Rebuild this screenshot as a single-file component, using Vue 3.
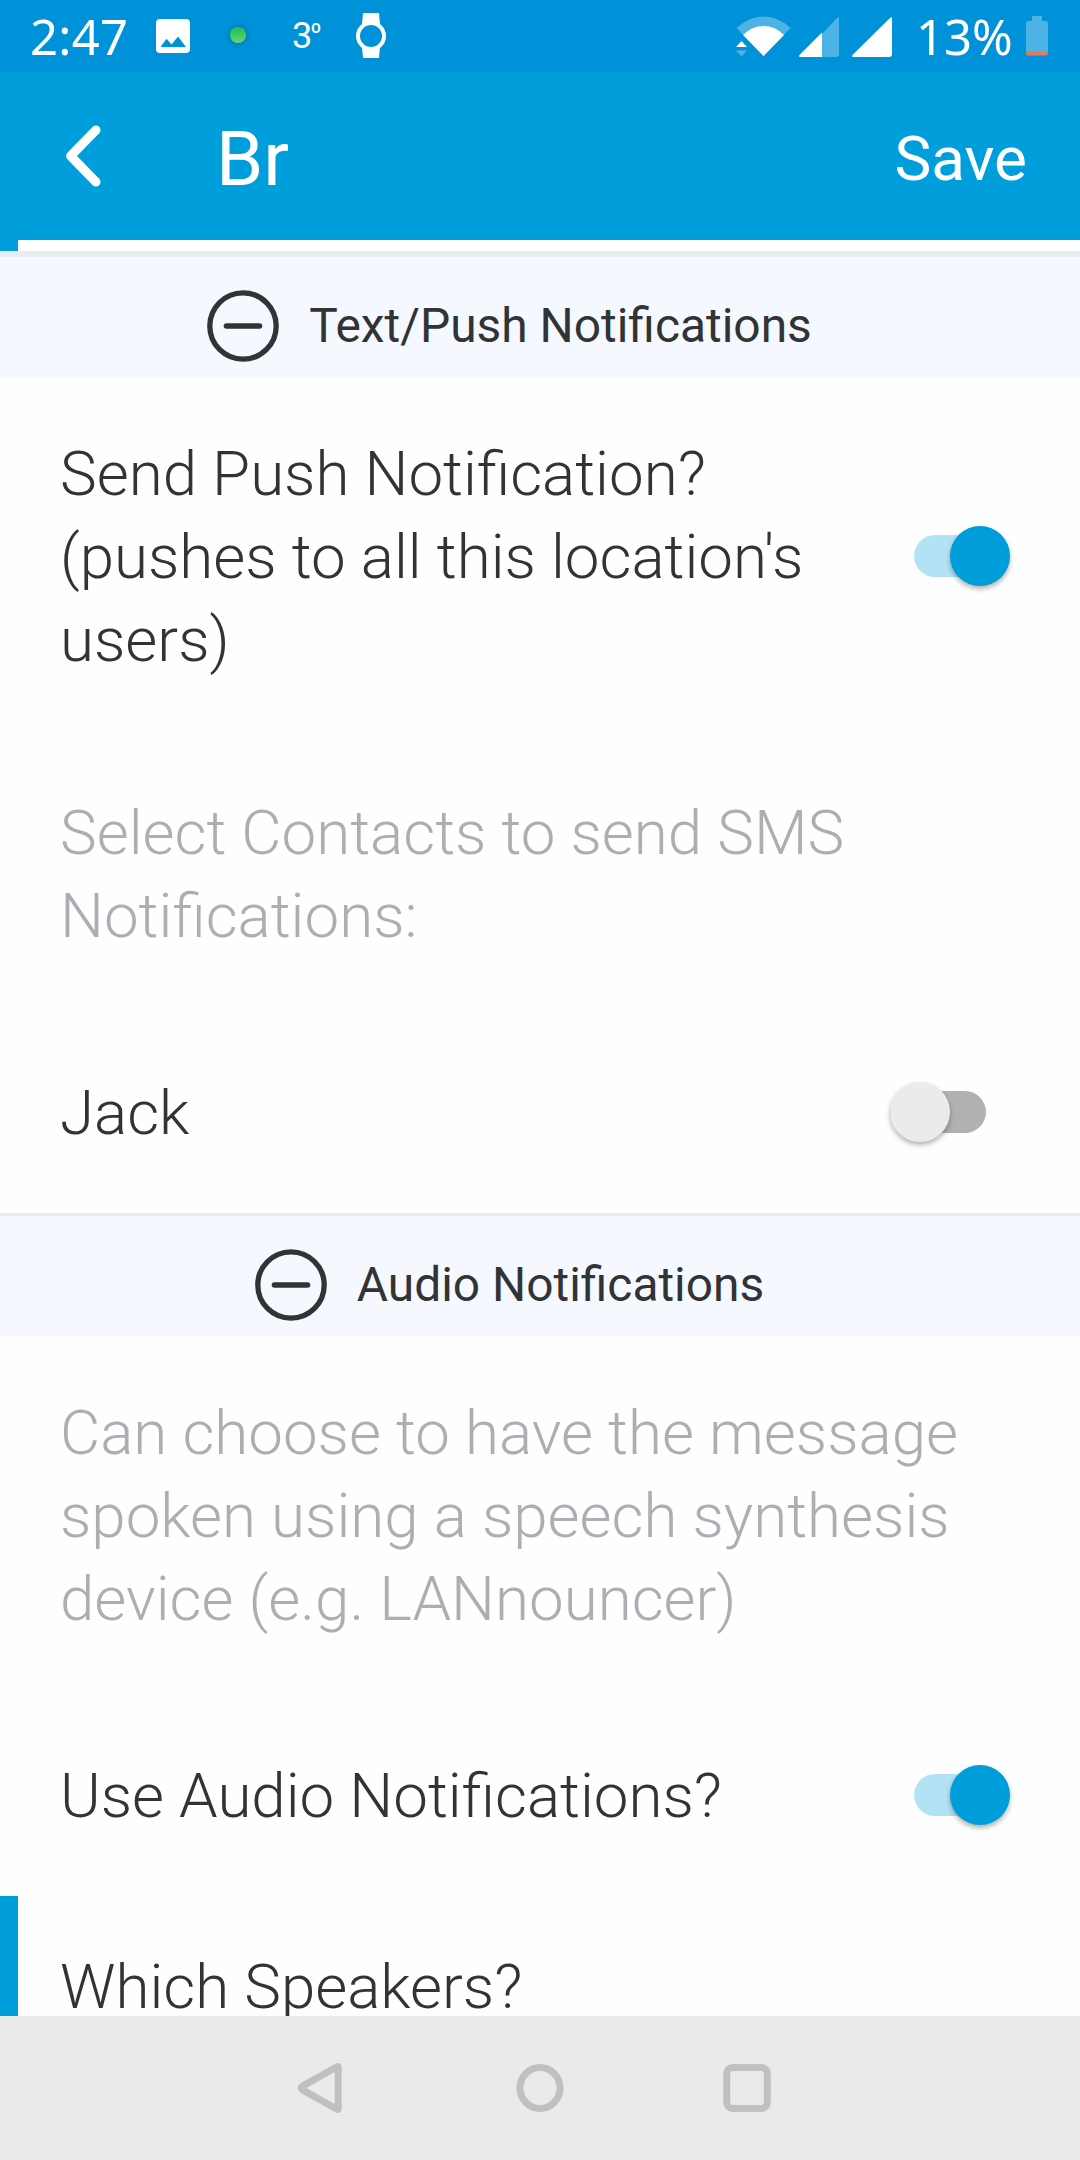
<script setup>
import { ref } from 'vue'

const sections = ref([
  {
    title: 'Text/Push Notifications',
    rows: [
      { label: "Send Push Notification? (pushes to all this location's users)", size: 'tall', on: true },
      { label: 'Select Contacts to send SMS Notifications:', size: 'medium', muted: true },
      { label: 'Jack', size: 'short', on: false },
    ],
  },
  {
    title: 'Audio Notifications',
    rows: [
      {
        label: 'Can choose to have the message spoken using a speech synthesis device (e.g. LANnouncer)',
        size: 'tall',
        muted: true,
      },
      { label: 'Use Audio Notifications?', size: 'short', on: true },
      { label: 'Which Speakers?', size: 'last', marked: true },
    ],
  },
])
</script>

<template>
  <div class="screen">
    <header class="status">
      <span class="clock">2:47</span>
      <svg class="photo" width="34" height="34" viewBox="0 0 34 34">
        <path fill="#fff" fill-rule="evenodd" d="M4 0H30Q34 0 34 4V30Q34 34 30 34H4Q0 34 0 30V4Q0 0 4 0ZM4.500 28H30L22 17.500L15.500 25.500L10.500 19.800Z" />
      </svg>
      <span class="dot"></span>
      <span class="temp">3<span class="degree">º</span></span>
      <svg class="watch" width="30" height="46" viewBox="0 0 30 46">
        <path fill="#fff" d="M7 0H23L24 11H6ZM6 34H24L23 45H7Z" />
        <circle cx="15" cy="23" r="13" fill="#0092d8" stroke="#fff" stroke-width="4" />
      </svg>
      <span class="grow"></span>
      <svg class="wifi" width="55" height="41" viewBox="0 0 55 41">
        <path fill="#4db3e4" d="M0.500 12Q12.500 0.500 27.500 0.500T54.500 12L27.500 40Z" />
        <path fill="#fff" d="M7 19Q16 10 27.500 10T48 19L27.500 40Z" />
        <path fill="#fff" d="M5.500 25L11 31H0Z" />
        <path fill="#4db3e4" d="M0 34.500H11L5.500 40.500Z" />
      </svg>
      <svg class="signal" width="40" height="40" viewBox="0 0 40 40">
        <path fill="#4db3e4" d="M23 17L38 1Q40 -0.500 40 1V37Q40 40 37 40H23Z" />
        <path fill="#fff" d="M23 15.500V40H1Q-0.500 40 0.500 38Z" />
      </svg>
      <svg class="signal-full" width="40" height="40" viewBox="0 0 40 40">
        <path fill="#fff" d="M0.500 38L38 1Q40 -0.500 40 1V37Q40 40 37 40H1Q-0.500 40 0.500 38Z" />
      </svg>
      <span class="percent">13%</span>
      <svg class="battery" width="22" height="40" viewBox="0 0 22 40">
        <path fill="#4db3e4" d="M6 0H16V5H20Q22 5 22 7V35H0V7Q0 5 2 5H6Z" />
        <path fill="#e7785a" d="M0 35H22V37Q22 39.500 20 39.500H2Q0 39.500 0 37Z" />
      </svg>
    </header>

    <nav class="appbar">
      <svg class="back" width="36" height="62" viewBox="0 0 36 62">
        <path d="M30 5L4.600 31L30 57" fill="none" stroke="#fff" stroke-width="9" stroke-linecap="round" stroke-linejoin="round" />
      </svg>
      <h1>Br</h1>
      <button type="button">Save</button>
    </nav>
    <div class="strip"></div>

    <main>
      <section v-for="section in sections" :key="section.title">
        <div class="heading">
          <svg width="72" height="72" viewBox="0 0 72 72">
            <g fill="none" stroke="#313335" stroke-width="5.300">
              <circle cx="36" cy="36" r="33.200" />
              <path d="M19.500 36H52.500" stroke-width="5.600" stroke-linecap="round" />
            </g>
          </svg>
          <h2>{{ section.title }}</h2>
        </div>
        <div
          v-for="row in section.rows"
          :key="row.label"
          class="row"
          :class="[row.size, { muted: row.muted, marked: row.marked }]"
        >
          <p>{{ row.label }}</p>
          <div v-if="row.on !== undefined" class="toggle" :class="{ on: row.on }">
            <span class="thumb"></span>
          </div>
        </div>
      </section>
    </main>

    <footer>
      <svg class="nav-back" width="48" height="50" viewBox="0 0 48 50">
        <path d="M41.200 4.500V45.500Q41.200 47 39.500 46L5 26.500Q3 25 5 23.500L39.500 4Q41.200 3 41.200 4.500Z" />
      </svg>
      <svg class="nav-home" width="48" height="50" viewBox="0 0 48 50">
        <ellipse cx="24" cy="25" rx="20" ry="20.500" />
      </svg>
      <svg width="48" height="50" viewBox="0 0 48 50">
        <rect x="3.700" y="4.500" width="40.600" height="41" rx="6" />
      </svg>
    </footer>
  </div>
</template>

<style>
body {
  margin: 0;
}
</style>

<style scoped>
.screen {
  width: 1080px;
  height: 2160px;
  display: flex;
  flex-direction: column;
  overflow: hidden;
  background: #fefefe;
  color: #313335;
  font-family: Roboto, sans-serif;
}
h1,
h2,
p {
  margin: 0;
  font-weight: 400;
}
svg {
  display: block;
  flex: none;
}
.status {
  flex: none;
  height: 72px;
  display: flex;
  align-items: flex-start;
  background: #0092d8;
  color: #fff;
}
.clock,
.percent {
  font-family: "Noto Sans", sans-serif;
  font-size: 49px;
  line-height: 72px;
  white-space: nowrap;
}
.clock {
  width: 126px;
  margin-left: 30px;
  letter-spacing: 0.3px;
}
.photo {
  margin-top: 19px;
}
.dot {
  width: 16px;
  height: 16px;
  margin: 27px 0 0 40px;
  border-radius: 50%;
  background: linear-gradient(#21bd4b, #61d878);
  box-shadow: 0 0 4px 2px #087bb4;
}
.temp {
  width: 64px;
  height: 72px;
  margin-left: 46px;
  font-size: 36px;
  line-height: 72px;
  white-space: nowrap;
}
.degree {
  margin-left: -2px;
  font-size: 25px;
  line-height: 0;
  vertical-align: 7px;
}
.watch {
  margin-top: 13px;
}
.grow {
  flex: 1;
}
.wifi {
  margin: 16px 8px 0 0;
}
.signal {
  margin: 17px 13px 0 0;
}
.signal-full {
  margin-top: 17px;
}
.percent {
  width: 110px;
  margin-left: 24px;
}
.battery {
  margin: 16px 32px 0 0;
}
.appbar {
  flex: none;
  height: 168px;
  display: flex;
  align-items: center;
  background: #009fdc;
  color: #fff;
}
.back {
  margin: 0 0 0 66px;
}
h1 {
  flex: 1;
  margin: 5px 0 0 114px;
  font-size: 76px;
  line-height: 90px;
}
button {
  margin: 5px 53px 0 0;
  padding: 0;
  border: 0;
  background: none;
  color: inherit;
  font: 400 62px/74px Roboto, sans-serif;
}
.strip {
  flex: none;
  box-sizing: border-box;
  height: 11px;
  border-left: 18px solid #009fdc;
  background: #fff;
}
main {
  flex: 1;
  min-height: 0;
  overflow: hidden;
}
.heading {
  height: 120px;
  display: flex;
  align-items: center;
  justify-content: center;
  gap: 30px;
  border-top: 3px solid #e9edf1;
  background: #f5f8ff;
}
section:first-child .heading {
  border-top-width: 6px;
}
.heading svg {
  margin: 18px 0 0;
}
h2 {
  margin: 17px 61px 0 0;
  font-size: 47.900px;
  line-height: 58px;
}
.row {
  box-sizing: border-box;
  display: flex;
  align-items: center;
  padding-left: 60px;
}
.tall {
  height: 360px;
}
.medium {
  height: 276px;
}
.short {
  height: 200px;
}
.last {
  height: 182px;
}
.marked {
  padding-left: 42px;
  border-left: 18px solid #009fdc;
}
p {
  width: 930px;
  font-size: 61.850px;
  font-weight: 300;
  line-height: 83px;
}
.row:has(.toggle) p {
  width: 800px;
}
.muted {
  color: #adaeb3;
}
.toggle {
  position: relative;
  width: 96px;
  height: 42px;
  margin: -2px 0 0 30px;
  border-radius: 21px;
  background: #b1b1b1;
}
.toggle.on {
  margin-left: 54px;
  background: #b3e2f4;
}
.thumb {
  position: absolute;
  left: 0;
  top: -9px;
  width: 60px;
  height: 60px;
  border-radius: 50%;
  background: #ebebeb;
  box-shadow: 0 3px 5px rgba(0, 0, 0, 0.3);
}
.on .thumb {
  left: 35.500px;
  background: #009ddb;
}
footer {
  flex: none;
  height: 144px;
  display: flex;
  align-items: center;
  justify-content: center;
  background: #eaeaea;
}
footer svg {
  fill: none;
  stroke: #c0c0c0;
  stroke-width: 7px;
}
.nav-back {
  margin: 0 171px 0 -12px;
}
.nav-home {
  margin-right: 159px;
}
</style>
